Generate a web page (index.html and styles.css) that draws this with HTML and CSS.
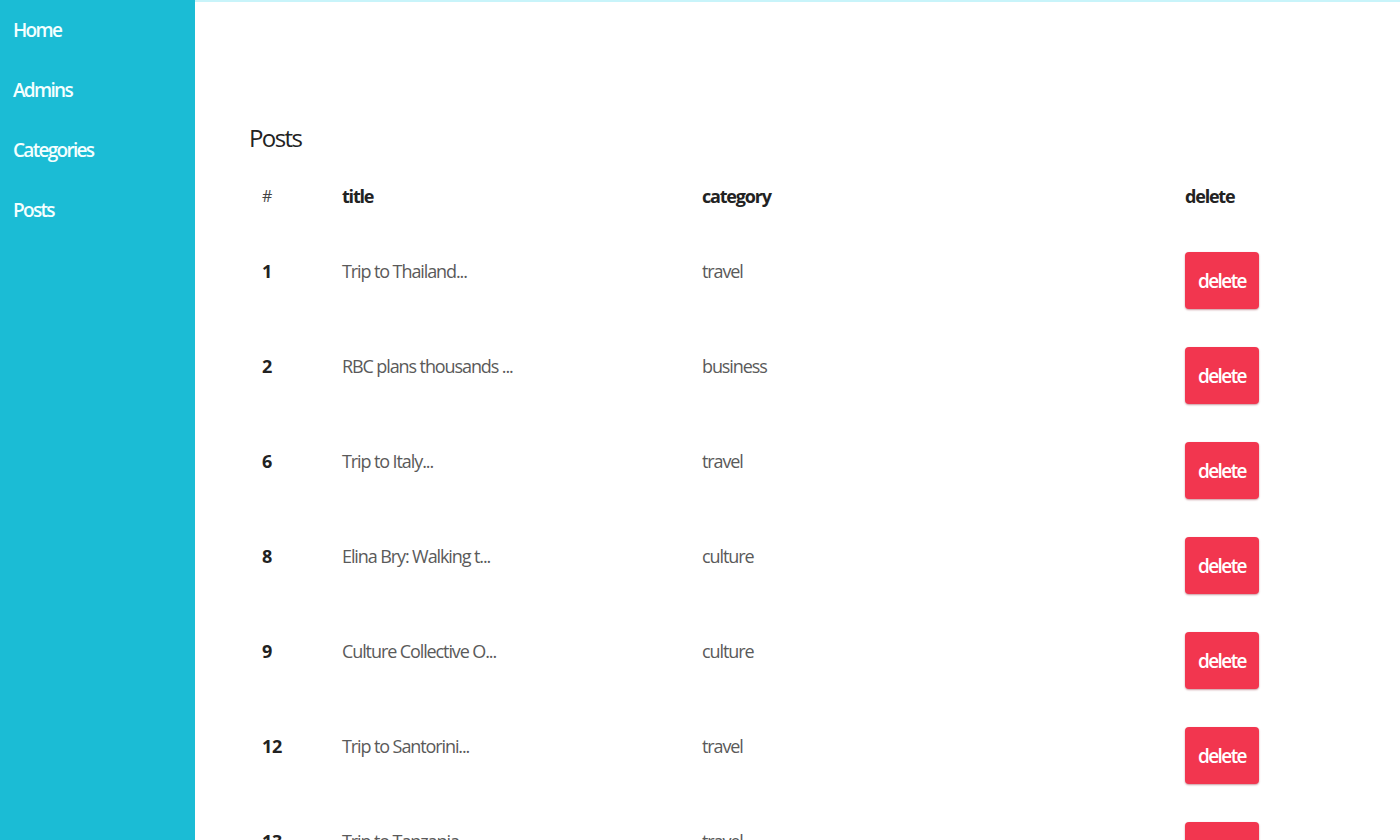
FILE: index.html
```html
<!DOCTYPE html>
<html>
<head>
<meta charset="utf-8">
<link rel="stylesheet" href="styles.css">
</head>
<body>
<div class="layout">
  <nav class="sidebar">
    <a class="nav-link" href="#">Home</a>
    <a class="nav-link" href="#">Admins</a>
    <a class="nav-link" href="#">Categories</a>
    <a class="nav-link" href="#">Posts</a>
  </nav>
  <main class="main">
    <h2 class="page-title">Posts</h2>
    <table class="posts">
      <thead>
        <tr><th class="c-id id-head">#</th><th class="c-title">title</th><th class="c-cat">category</th><th class="c-del">delete</th></tr>
      </thead>
      <tbody>
        <tr><td class="c-id">1</td><td class="c-title">Trip to Thailand...</td><td class="c-cat">travel</td><td class="c-del"><button class="btn-del">delete</button></td></tr>
        <tr><td class="c-id">2</td><td class="c-title">RBC plans thousands ...</td><td class="c-cat">business</td><td class="c-del"><button class="btn-del">delete</button></td></tr>
        <tr><td class="c-id">6</td><td class="c-title">Trip to Italy...</td><td class="c-cat">travel</td><td class="c-del"><button class="btn-del">delete</button></td></tr>
        <tr><td class="c-id">8</td><td class="c-title">Elina Bry: Walking t...</td><td class="c-cat">culture</td><td class="c-del"><button class="btn-del">delete</button></td></tr>
        <tr><td class="c-id">9</td><td class="c-title">Culture Collective O...</td><td class="c-cat">culture</td><td class="c-del"><button class="btn-del">delete</button></td></tr>
        <tr><td class="c-id">12</td><td class="c-title">Trip to Santorini...</td><td class="c-cat">travel</td><td class="c-del"><button class="btn-del">delete</button></td></tr>
        <tr><td class="c-id">13</td><td class="c-title">Trip to Tanzania...</td><td class="c-cat">travel</td><td class="c-del"><button class="btn-del">delete</button></td></tr>
      </tbody>
    </table>
  </main>
</div>
</body>
</html>
```

FILE: styles.css
```css
html, body {
  margin: 0;
  padding: 0;
  height: 100%;
  overflow: hidden;
  background: #ffffff;
  font-family: "Open Sans", "Noto Sans", sans-serif;
}

.layout {
  display: flex;
  height: 840px;
}

.sidebar {
  width: 195px;
  flex: 0 0 195px;
  background: #1bbcd5;
  display: flex;
  flex-direction: column;
  padding-top: 18px;
  box-sizing: border-box;
}

.nav-link {
  color: #f4ffff;
  text-decoration: none;
  font-size: 19px;
  font-weight: 600;
  line-height: 24px;
  padding-left: 13px;
  margin-bottom: 36px;
  letter-spacing: -1.7px;
}

.main {
  flex: 1;
  border-top: 2px solid #c8f4fa;
  padding: 0 0 0 54px;
  box-sizing: border-box;
}

.page-title {
  margin: 120px 0 18px 0;
  font-size: 24px;
  line-height: 32px;
  font-weight: 400;
  color: #222;
  letter-spacing: -1.6px;
}

.posts {
  border-collapse: collapse;
  width: 1100px;
  table-layout: fixed;
}

.posts th {
  text-align: left;
  font-weight: 700;
  font-size: 18px;
  line-height: 24px;
  color: #222;
  padding: 12px 0 34px 13px;
  vertical-align: top;
  letter-spacing: -1.2px;
}

.posts .id-head {
  font-weight: 400;
  font-size: 16px;
  color: #444;
}

.posts td {
  font-size: 18px;
  line-height: 24px;
  color: #5a5a5a;
  padding: 17px 0 0 13px;
  vertical-align: top;
  height: 95px;
  box-sizing: border-box;
  letter-spacing: -1.1px;
}

.posts td.c-id {
  font-weight: 700;
  color: #222;
  letter-spacing: -0.4px;
}

.c-id { width: 67px; }
.c-title { width: 347px; }
.c-cat { width: 470px; }
.c-del { width: auto; }

.posts td.c-del {
  padding-top: 10px;
}

.btn-del {
  width: 74px;
  height: 57px;
  border: none;
  border-radius: 4px;
  background: #f2364f;
  color: #fff;
  font-family: "Open Sans", "Noto Sans", sans-serif;
  font-size: 19px;
  font-weight: 600;
  letter-spacing: -1.6px;
  padding: 0;
  box-shadow: 0 1px 2px rgba(120, 0, 20, 0.4);
}
```
